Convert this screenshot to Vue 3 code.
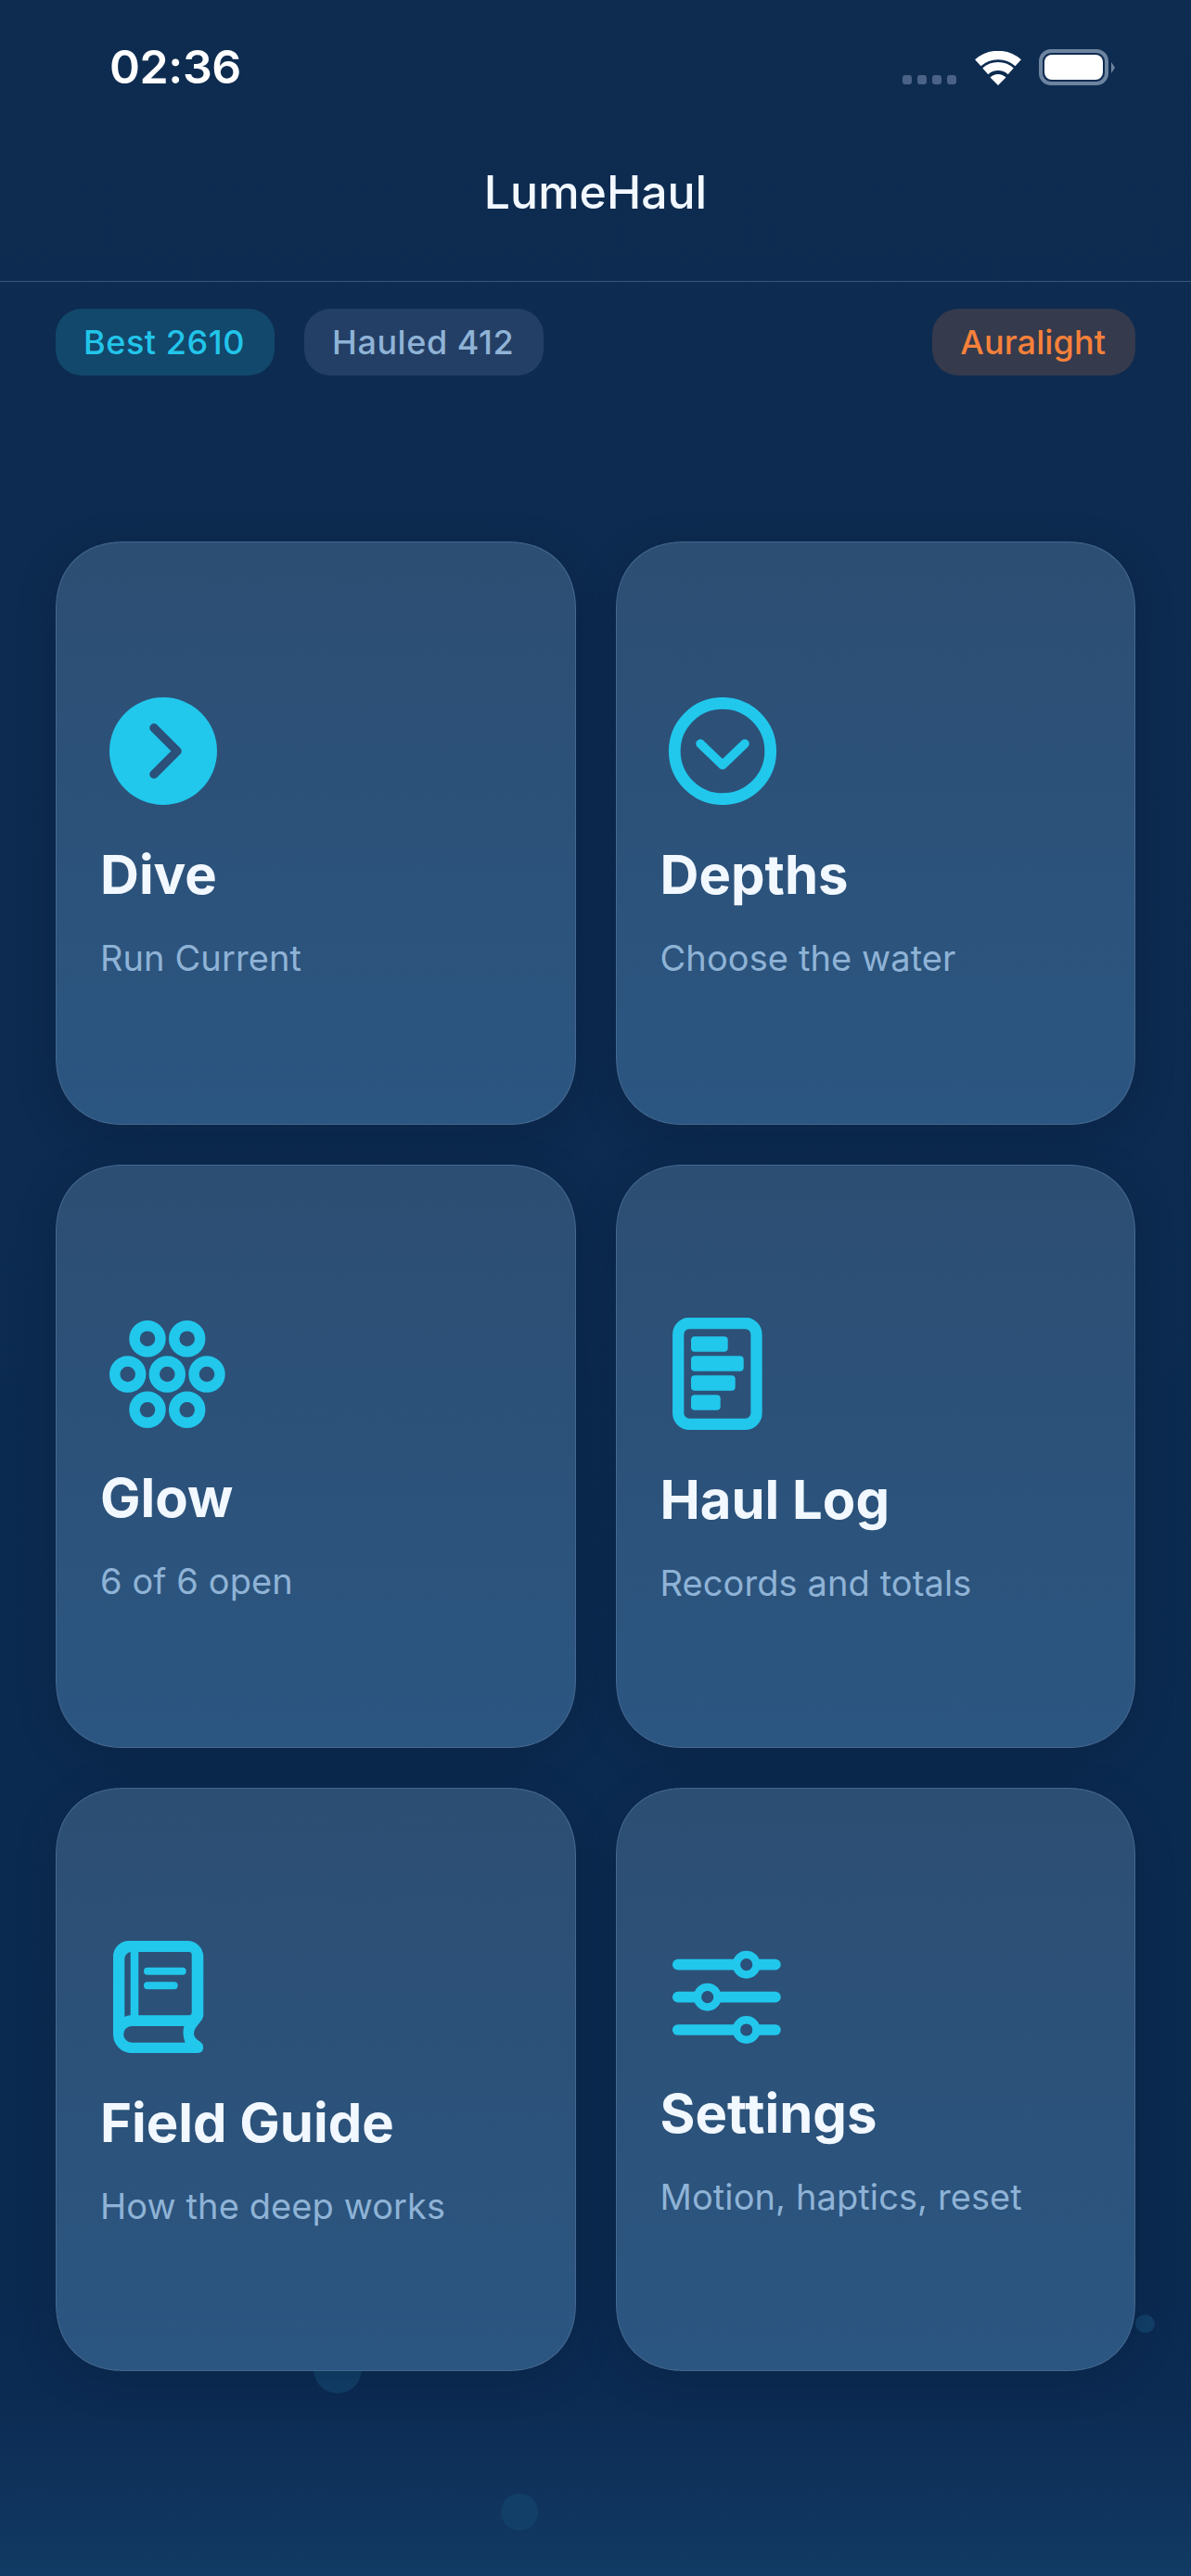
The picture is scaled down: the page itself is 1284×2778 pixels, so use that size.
<script setup>
const tiles = [
  { key: 'dive', title: 'Dive', sub: 'Run Current', height: 116 },
  { key: 'depths', title: 'Depths', sub: 'Choose the water', height: 116 },
  { key: 'glow', title: 'Glow', sub: '6 of 6 open', height: 116 },
  { key: 'log', title: 'Haul Log', sub: 'Records and totals', height: 121 },
  { key: 'guide', title: 'Field Guide', sub: 'How the deep works', height: 121 },
  { key: 'settings', title: 'Settings', sub: 'Motion, haptics, reset', height: 101 }
]

const glowRings = [
  [51, 19.7], [93.7, 19.7],
  [29.7, 58], [72.3, 58], [115, 58],
  [51, 96.3], [93.7, 96.3]
]
const logBars = [
  [20.3, 39.7], [41.3, 56.7], [62.3, 47.7], [83.3, 31.7]
]
const sliders = [
  [15.7, 92.7], [50.7, 50.7], [86, 92.7]
]
</script>

<template>
  <div class="screen">
    <span class="bubble bubble-a"></span>
    <span class="bubble bubble-b"></span>
    <span class="bubble bubble-c"></span>

    <div class="status-bar">
      <span class="time">02:36</span>
      <div class="status-icons">
        <div class="signal">
          <i></i><i></i><i></i><i></i>
        </div>
        <svg class="wifi" width="50" height="37" viewBox="0 0 50 37">
          <path d="M3.3 12.8A32.5 32.5 0 0 1 46.7 12.8" fill="none" stroke="#fff" stroke-width="9.5" />
          <path d="M11.3 21.8A20.5 20.5 0 0 1 38.7 21.8" fill="none" stroke="#fff" stroke-width="9" />
          <path d="M25 37L16.5 28.5A12 12 0 0 1 33.5 28.5Z" fill="#fff" />
        </svg>
        <div class="battery">
          <div class="battery-body"><div class="battery-fill"></div></div>
          <div class="battery-cap"></div>
        </div>
      </div>
    </div>

    <header class="top-bar">
      <h1>LumeHaul</h1>
    </header>

    <div class="pills">
      <span class="pill pill-best">Best 2610</span>
      <span class="pill pill-hauled">Hauled 412</span>
      <span class="pill pill-mode">Auralight</span>
    </div>

    <div class="grid">
      <div v-for="tile in tiles" :key="tile.key" class="card">
        <svg class="icon" width="140" :height="tile.height" :viewBox="`0 0 140 ${tile.height}`">
          <template v-if="tile.key === 'dive'">
            <circle cx="68" cy="58" r="58" fill="#22c7ec" />
            <path d="M58 33L83 58L58 83" fill="none" stroke="#2b5079" stroke-width="9.5" stroke-linecap="round" stroke-linejoin="round" />
          </template>
          <template v-else-if="tile.key === 'depths'">
            <circle cx="67" cy="58" r="51.7" fill="none" stroke="#22c7ec" stroke-width="12.7" />
            <path d="M43 50L67 73L91 50" fill="none" stroke="#22c7ec" stroke-width="9.5" stroke-linecap="round" stroke-linejoin="round" />
          </template>
          <template v-else-if="tile.key === 'glow'">
            <circle v-for="(ring, i) in glowRings" :key="i" :cx="ring[0]" :cy="ring[1]" r="14" fill="none" stroke="#22c7ec" stroke-width="11.4" />
          </template>
          <template v-else-if="tile.key === 'log'">
            <rect x="19.2" y="6" width="84.3" height="108.8" rx="12" fill="none" stroke="#22c7ec" stroke-width="12.3" />
            <rect v-for="(bar, i) in logBars" :key="i" x="33" :y="bar[0]" :width="bar[1]" height="16.4" rx="4" fill="#22c7ec" />
          </template>
          <template v-else-if="tile.key === 'guide'">
            <path fill="#22c7ec" fill-rule="evenodd" d="M31 0H94A17.3 17.3 0 0 1 111.3 17V80C111.3 87 101 92 101 100C101 106 108 108 110 111C112.5 115 111 121 105 121H34A20 20 0 0 1 14 101V17A17 17 0 0 1 31 0ZM32.7 12V80.3Q29 80.5 26.3 82V20A8 8 0 0 1 32.7 12ZM41.3 12H95.7A3 3 0 0 1 98.7 15V77.3A3 3 0 0 1 95.7 80.3H41.3ZM34 92H90.5Q88 100 91.5 109.7H34A8.85 8.85 0 0 1 34 92Z" />
            <path d="M51 32.7H88.7M51 48.2H79.7" fill="none" stroke="#22c7ec" stroke-width="8" stroke-linecap="round" />
          </template>
          <template v-else>
            <g v-for="(s, i) in sliders" :key="i">
              <path :d="`M18.8 ${s[0]}H123.9`" fill="none" stroke="#22c7ec" stroke-width="11.7" stroke-linecap="round" />
              <circle :cx="s[1]" :cy="s[0]" r="10.8" fill="#2b5079" stroke="#22c7ec" stroke-width="8.4" />
            </g>
          </template>
        </svg>
        <div class="card-title">{{ tile.title }}</div>
        <div class="card-sub">{{ tile.sub }}</div>
      </div>
    </div>
  </div>
</template>

<style>
html,
body {
  margin: 0;
  background: #0e2c50;
}
</style>

<style scoped>
.screen {
  position: relative;
  width: 1284px;
  height: 2778px;
  overflow: hidden;
  font-family: Inter, 'Noto Sans', sans-serif;
  background: linear-gradient(180deg, #0e2c50 0%, #0d2b50 20%, #0b2a50 88%, #0c2b53 93%, #0f335c 97%, #113b64 100%);
}
.bubble {
  position: absolute;
  border-radius: 50%;
  background: #123f68;
}
.bubble-a {
  left: 338px;
  top: 2529px;
  width: 52px;
  height: 52px;
}
.bubble-b {
  left: 540px;
  top: 2689px;
  width: 40px;
  height: 40px;
}
.bubble-c {
  left: 1224px;
  top: 2496px;
  width: 21px;
  height: 20px;
}
.status-bar {
  position: relative;
  display: flex;
  justify-content: space-between;
  align-items: flex-start;
  height: 100px;
  padding: 42px 82px 0 118px;
  box-sizing: border-box;
}
.time {
  color: #fff;
  font-size: 50px;
  font-weight: 600;
  line-height: 60px;
  letter-spacing: -0.4px;
}
.status-icons {
  display: flex;
  align-items: flex-end;
  padding-top: 11px;
}
.signal {
  display: flex;
  gap: 6px;
  margin-right: 20px;
  margin-bottom: 1px;
}
.signal i {
  display: block;
  width: 10px;
  height: 10px;
  border-radius: 3px;
  background: #4a6285;
}
.battery {
  display: flex;
  align-items: center;
  margin-left: 19px;
}
.battery-body {
  box-sizing: border-box;
  width: 75px;
  height: 39px;
  border: 4px solid #6d84a0;
  border-radius: 13px;
  padding: 2px;
}
.battery-fill {
  height: 100%;
  background: #fff;
  border-radius: 8px;
}
.battery-cap {
  width: 0;
  height: 0;
  margin-left: 3px;
  border-left: 4px solid #6d84a0;
  border-top: 6px solid transparent;
  border-bottom: 6px solid transparent;
}
.top-bar {
  position: relative;
  height: 204px;
  box-sizing: border-box;
  border-bottom: 1px solid #35567f;
}
.top-bar h1 {
  margin: 0;
  padding-top: 78px;
  text-align: center;
  color: #f2f8ff;
  font-size: 50px;
  font-weight: 500;
  line-height: 58px;
}
.pills {
  position: relative;
  display: flex;
  gap: 32px;
  padding: 29px 60px 0;
}
.pill {
  height: 72px;
  padding: 0 32px 0 30px;
  border-radius: 28px;
  font-size: 36px;
  font-weight: 500;
  line-height: 72px;
  letter-spacing: 0.55px;
}
.pill-best {
  background: #12486c;
  color: #22c5ea;
}
.pill-hauled {
  background: #243f65;
  color: #8fb3d6;
}
.pill-mode {
  margin-left: auto;
  background: #353a4d;
  color: #f7813a;
  letter-spacing: 0.1px;
}
.grid {
  position: relative;
  display: grid;
  grid-template-columns: 1fr 1fr;
  grid-auto-rows: 629px;
  gap: 43px;
  padding: 179px 60px 0;
}
.card {
  display: flex;
  flex-direction: column;
  justify-content: center;
  box-sizing: border-box;
  padding: 10px 0 0 47px;
  border: 1px solid #46688f;
  border-radius: 74px;
  corner-shape: superellipse(1.15);
  background: linear-gradient(180deg, #2d4e73 0%, #2b5681 100%);
  box-shadow: 0 10px 44px rgba(6, 22, 46, 0.24);
}
.icon {
  display: block;
}
.card-title {
  margin-top: 40px;
  color: #f2f8ff;
  font-size: 58px;
  font-weight: 700;
  line-height: 70px;
}
.card-sub {
  margin-top: 32px;
  color: #8fb3d6;
  font-size: 38px;
  line-height: 46px;
  letter-spacing: 0.1px;
}
</style>
